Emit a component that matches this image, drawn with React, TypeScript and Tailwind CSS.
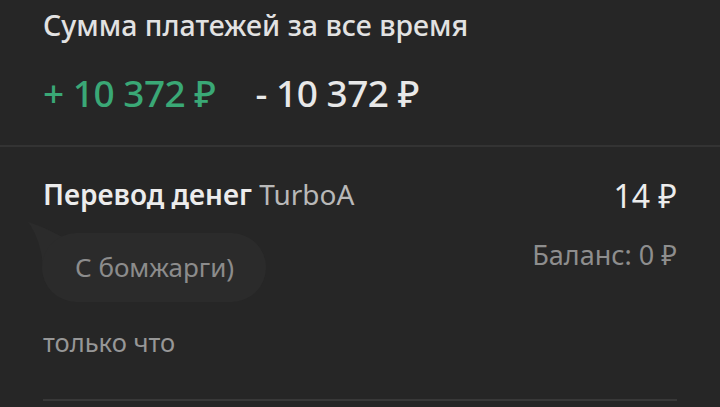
import React from "react";

export default function App() {
  return (
    <div
      className="w-[720px] h-[407px] overflow-hidden bg-[#262626] text-[#e6e6e6]"
      style={{ fontFamily: '"Noto Sans", "Open Sans", sans-serif' }}
    >
      <div className="px-[43px] pt-[6px] h-[145px]">
        <div className="text-[28.5px] leading-[38px] font-medium text-[#e2e2e2]">Сумма платежей за все время</div>
        <div className="flex gap-[40px] mt-[27px] text-[37px] leading-[44px] font-medium tracking-[-0.5px]">
          <span className="text-[#3aa876]">+ 10 372 ₽</span>
          <span className="text-[#e8e8e8]">- 10 372 ₽</span>
        </div>
      </div>
      <div className="h-[2px] bg-[#333333]" />
      <div className="px-[43px] pt-[29px]">
        <div className="flex justify-between">
          <div className="flex flex-col items-start">
            <div className="text-[28px] leading-[36px]">
              <span className="font-semibold text-[#ececec]">Перевод денег</span>{" "}
              <span className="text-[#b8b8b8]">TurboA</span>
            </div>
            <div className="relative mt-[21px] ml-[-1px]">
              <svg
                className="absolute left-[-16px] top-[-12px]"
                width="80"
                height="60"
                viewBox="0 0 80 60"
              >
                <path d="M2 1 C12 4 24 9 36 16 L50 46 L17 46 C16 30 11 13 2 1 Z" fill="#2b2b2b" />
              </svg>
              <div className="relative h-[69px] pl-[33px] pr-[32px] rounded-full bg-[#2b2b2b] flex items-center text-[26px] text-[#8c8c8c]">
                С бомжарги)
              </div>
            </div>
            <div className="mt-[23px] text-[25.5px] leading-[34px] text-[#979797]">только что</div>
          </div>
          <div className="flex flex-col items-end">
            <div className="text-[32px] leading-[40px] text-[#ececec]">14 ₽</div>
            <div className="mt-[21px] text-[27px] leading-[36px] text-[#8e8e8e]">Баланс: 0 ₽</div>
          </div>
        </div>
        <div className="mt-[40px] h-[2px] bg-[#383838]" />
      </div>
    </div>
  );
}
